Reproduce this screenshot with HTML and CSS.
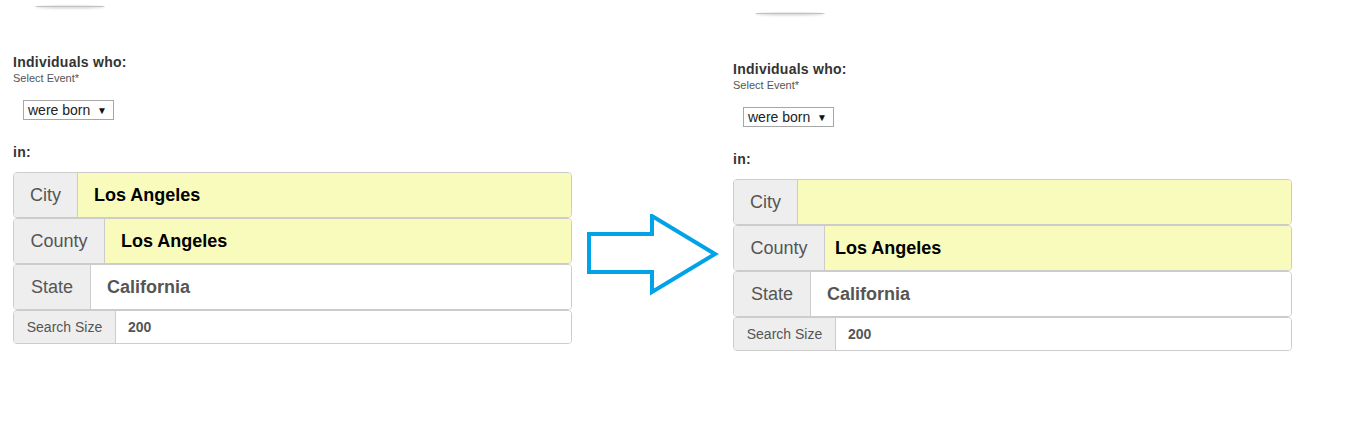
FILE: index.html
```html
<!DOCTYPE html>
<html>
<head>
<meta charset="utf-8">
<link rel="stylesheet" href="styles.css">
</head>
<body>
<div class="page">
  <section class="panel">
    <div class="shade"></div>
    <h2 class="heading">Individuals who:</h2>
    <div class="hint">Select Event*</div>
    <div class="select"><span>were born</span><span class="caret">▼</span></div>
    <h2 class="heading in">in:</h2>
    <div class="rows">
      <div class="row"><div class="lbl w-city">City</div><div class="val yellow dark">Los Angeles</div></div>
      <div class="row"><div class="lbl w-county">County</div><div class="val yellow dark">Los Angeles</div></div>
      <div class="row"><div class="lbl w-state">State</div><div class="val">California</div></div>
      <div class="row small"><div class="lbl w-size">Search Size</div><div class="val">200</div></div>
    </div>
  </section>
  <div class="arrow-col">
    <svg class="arrow" width="140" height="90" viewBox="0 0 140 90">
      <polygon points="4,20 67,20 67,2 130,40 67,78 67,58 4,58" fill="none" stroke="#00a2e8" stroke-width="4" stroke-linejoin="miter"/>
    </svg>
  </div>
  <section class="panel shifted">
    <div class="shade"></div>
    <h2 class="heading">Individuals who:</h2>
    <div class="hint">Select Event*</div>
    <div class="select"><span>were born</span><span class="caret">▼</span></div>
    <h2 class="heading in">in:</h2>
    <div class="rows">
      <div class="row"><div class="lbl w-city">City</div><div class="val yellow dark"></div></div>
      <div class="row"><div class="lbl w-county">County</div><div class="val yellow dark tight">Los Angeles</div></div>
      <div class="row"><div class="lbl w-state">State</div><div class="val">California</div></div>
      <div class="row small"><div class="lbl w-size">Search Size</div><div class="val">200</div></div>
    </div>
  </section>
</div>
</body>
</html>
```
FILE: styles.css
```css
* { box-sizing: border-box; }
html, body { margin: 0; padding: 0; background: #fff; }
body { font-family: "Liberation Sans", Arial, sans-serif; color: #333; }

.page {
  display: flex;
  align-items: flex-start;
  padding-left: 13px;
}

.panel {
  width: 559px;
  display: flex;
  flex-direction: column;
  align-items: flex-start;
  padding-top: 5px;
}
.panel.shifted { margin-top: 7px; }

.shade {
  margin-left: 22px;
  width: 70px;
  height: 3px;
  border-radius: 50%;
  background: linear-gradient(to bottom, rgba(0,0,0,0) 0%, rgba(120,120,120,0.55) 60%, rgba(0,0,0,0) 100%);
  box-shadow: 0 1px 2px rgba(0,0,0,0.12);
}

.heading {
  margin: 46px 0 0 0;
  font-size: 14px;
  line-height: 16px;
  font-weight: bold;
  letter-spacing: 0.25px;
  color: #333;
}
.heading.in { margin-top: 24px; }

.hint {
  margin-top: 2px;
  font-size: 11px;
  line-height: 13px;
  color: #555;
}

.select {
  margin: 15px 0 0 10px;
  width: 91px;
  height: 20px;
  border: 1px solid #a6a6a6;
  display: flex;
  align-items: center;
  justify-content: space-between;
  padding: 0 6px 0 4px;
  font-size: 14px;
  color: #222;
  background: #fff;
}
.select .caret { font-size: 10px; color: #111; }

.rows {
  margin-top: 12px;
  width: 559px;
  display: flex;
  flex-direction: column;
}

.row {
  display: flex;
  height: 46px;
  border: 1px solid #cccccc;
  border-radius: 4px;
  overflow: hidden;
  font-size: 18px;
}
.row.small { height: 34px; font-size: 14px; }

.lbl {
  flex: none;
  background: #eeeeee;
  border-right: 1px solid #cccccc;
  color: #555;
  display: flex;
  align-items: center;
  justify-content: center;
}
.w-city { width: 64px; }
.w-county { width: 91px; }
.w-state { width: 77px; }
.w-size { width: 102px; }

.val {
  flex: 1;
  display: flex;
  align-items: center;
  padding-left: 16px;
  font-weight: bold;
  color: #555;
  background: #fff;
}
.val.tight { padding-left: 10px; }
.row.small .val { padding-left: 12px; }
.val.yellow { background: #f9fbbd; }
.val.dark { color: #000; }

.arrow-col {
  width: 161px;
  padding-top: 214px;
  padding-left: 13px;
  display: flex;
}
.arrow { display: block; }
```
